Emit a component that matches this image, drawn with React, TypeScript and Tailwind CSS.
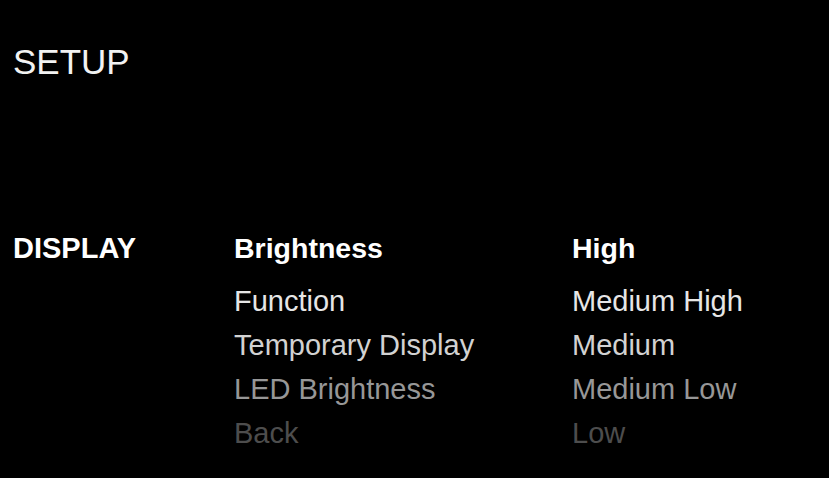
export default function App() {
  const rows = [
    { label: 'Function', value: 'Medium High', color: 'text-[#e6e6e6]' },
    { label: 'Temporary Display', value: 'Medium', color: 'text-[#d2d2d2]' },
    { label: 'LED Brightness', value: 'Medium Low', color: 'text-[#979797]' },
    { label: 'Back', value: 'Low', color: 'text-[#4d4d4d]' },
  ];

  return (
    <div className="h-[478px] w-full overflow-hidden bg-black pl-[13px] pt-[42px] font-['Liberation_Sans',Arial,sans-serif]">
      <h1 className="text-[35px] leading-[40px] text-[#f2f2f2]">SETUP</h1>

      <div className="mt-[144px] grid grid-cols-[221px_338px_1fr]">
        <div className="text-[29px] font-bold leading-[44px] text-white">DISPLAY</div>
        <div className="text-[28.5px] font-bold leading-[44px] text-white">Brightness</div>
        <div className="text-[28.5px] font-bold leading-[44px] text-white">High</div>

        <div className="col-start-2 mt-[9px]">
          {rows.map((r) => (
            <div key={r.label} className={`text-[29px] leading-[44px] ${r.color}`}>
              {r.label}
            </div>
          ))}
        </div>
        <div className="mt-[9px]">
          {rows.map((r) => (
            <div key={r.value} className={`text-[29px] leading-[44px] ${r.color}`}>
              {r.value}
            </div>
          ))}
        </div>
      </div>
    </div>
  );
}
